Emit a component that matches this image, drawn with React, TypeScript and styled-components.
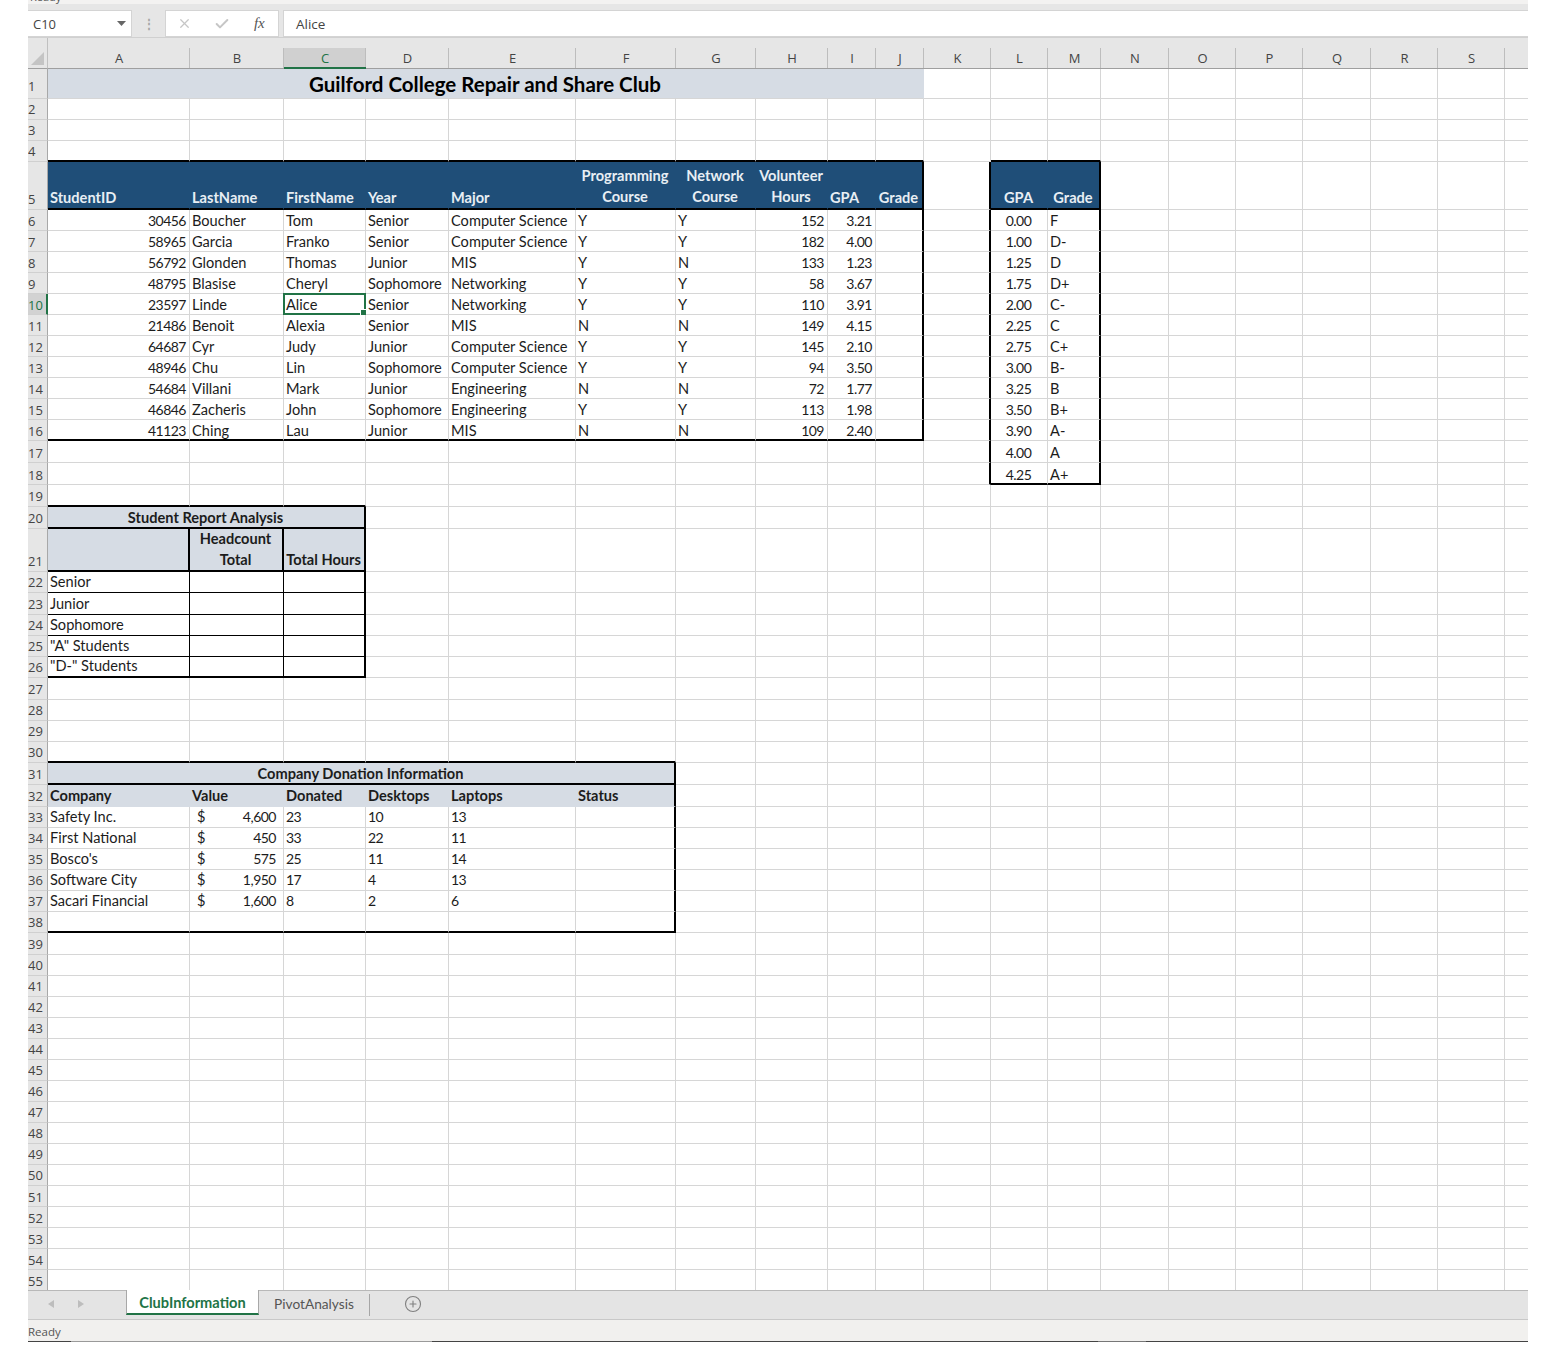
import React from 'react';
import styled, { createGlobalStyle } from 'styled-components';
import { X, Check, CirclePlus } from 'lucide-react';

const COL_WIDTHS = [142, 94, 82, 83, 127, 100, 80, 72, 48, 48, 67, 57, 53, 68, 67, 67, 68, 67, 67, 24];
const COL_LETTERS = 'ABCDEFGHIJKLMNOPQRS '.split('');
const ROW_EDGES = [
  69, 98, 119, 140, 161, 209, 230, 251, 272, 293, 314, 335, 356, 377, 398, 419, 440, 462, 484, 506, 528, 571, 592, 614,
  635, 656, 677, 699, 720, 741, 762, 784, 806, 827, 848, 869, 890, 911, 932, 954,
];
while (ROW_EDGES[ROW_EDGES.length - 1] < 1290) ROW_EDGES.push(ROW_EDGES[ROW_EDGES.length - 1] + 21);
const ROW_HEIGHTS = ROW_EDGES.slice(1).map((edge, i) => edge - ROW_EDGES[i] + (i === 0 ? 1 : 0));

const SLATE = '#d6dce4';
const NAVY = '#1f4e78';

type CellData = {
  lines?: string[];
  align?: 'left' | 'right' | 'center';
  bold?: boolean;
  fill?: string;
  light?: boolean;
  span?: number;
  title?: boolean;
  money?: string;
  sink?: number;
  right?: number;
  bottom?: number;
};

const cells: Record<string, CellData> = {};
const keyOf = (col: number, row: number) => `${col}:${row}`;
const put = (col: number, row: number, data: CellData) => {
  cells[keyOf(col, row)] = { ...cells[keyOf(col, row)], ...data };
};
const covered = new Set<string>();
const merge = (col: number, row: number, span: number, data: CellData) => {
  put(col, row, { ...data, span });
  for (let c = col + 1; c < col + span; c++) covered.add(keyOf(c, row));
};
const fillRange = (c1: number, c2: number, r1: number, r2: number, fill: string) => {
  for (let r = r1; r <= r2; r++) for (let c = c1; c <= c2; c++) put(c, r, { fill });
};
// outline a block of cells: the top and left edges live on the neighbouring cell
const box = (c1: number, r1: number, c2: number, r2: number, weight = 2) => {
  for (let c = c1; c <= c2; c++) {
    put(c, r1 - 1, { bottom: weight });
    put(c, r2, { bottom: weight });
  }
  for (let r = r1; r <= r2; r++) {
    if (c1 > 0) put(c1 - 1, r, { right: weight });
    put(c2, r, { right: weight });
  }
};

// title
merge(0, 1, 10, { lines: ['Guilford College Repair and Share Club'], title: true, fill: SLATE, align: 'center', bold: true });

// student table
fillRange(0, 9, 5, 5, NAVY);
const studentHead: [string[], CellData['align']][] = [
  [['StudentID'], 'left'],
  [['LastName'], 'left'],
  [['FirstName'], 'left'],
  [['Year'], 'left'],
  [['Major'], 'left'],
  [['Programming', 'Course'], 'center'],
  [['Network', 'Course'], 'center'],
  [['Volunteer', 'Hours'], 'center'],
  [['GPA'], 'left'],
  [['Grade'], 'center'],
];
studentHead.forEach(([lines, align], c) => put(c, 5, { lines, align, bold: true, light: true, sink: lines.length > 1 ? -1 : 0 }));
const students = [
  ['30456', 'Boucher', 'Tom', 'Senior', 'Computer Science', 'Y', 'Y', '152', '3.21'],
  ['58965', 'Garcia', 'Franko', 'Senior', 'Computer Science', 'Y', 'Y', '182', '4.00'],
  ['56792', 'Glonden', 'Thomas', 'Junior', 'MIS', 'Y', 'N', '133', '1.23'],
  ['48795', 'Blasise', 'Cheryl', 'Sophomore', 'Networking', 'Y', 'Y', '58', '3.67'],
  ['23597', 'Linde', 'Alice', 'Senior', 'Networking', 'Y', 'Y', '110', '3.91'],
  ['21486', 'Benoit', 'Alexia', 'Senior', 'MIS', 'N', 'N', '149', '4.15'],
  ['64687', 'Cyr', 'Judy', 'Junior', 'Computer Science', 'Y', 'Y', '145', '2.10'],
  ['48946', 'Chu', 'Lin', 'Sophomore', 'Computer Science', 'Y', 'Y', '94', '3.50'],
  ['54684', 'Villani', 'Mark', 'Junior', 'Engineering', 'N', 'N', '72', '1.77'],
  ['46846', 'Zacheris', 'John', 'Sophomore', 'Engineering', 'Y', 'Y', '113', '1.98'],
  ['41123', 'Ching', 'Lau', 'Junior', 'MIS', 'N', 'N', '109', '2.40'],
];
students.forEach((row, i) =>
  row.forEach((text, c) => put(c, 6 + i, { lines: [text], align: c === 0 || c >= 7 ? 'right' : 'left' })),
);
box(0, 5, 9, 16);
for (let c = 0; c <= 9; c++) put(c, 5, { bottom: 2 });

// grade scale
fillRange(11, 12, 5, 5, NAVY);
put(11, 5, { lines: ['GPA'], align: 'center', bold: true, light: true, sink: 0 });
put(12, 5, { lines: ['Grade'], align: 'center', bold: true, light: true, sink: 0 });
const scale = [
  ['0.00', 'F'], ['1.00', 'D-'], ['1.25', 'D'], ['1.75', 'D+'], ['2.00', 'C-'], ['2.25', 'C'], ['2.75', 'C+'],
  ['3.00', 'B-'], ['3.25', 'B'], ['3.50', 'B+'], ['3.90', 'A-'], ['4.00', 'A'], ['4.25', 'A+'],
];
scale.forEach(([gpa, grade], i) => {
  put(11, 6 + i, { lines: [gpa], align: 'center' });
  put(12, 6 + i, { lines: [grade], align: 'left' });
});
box(11, 5, 12, 18);
put(11, 5, { bottom: 2 });
put(12, 5, { bottom: 2 });

// report analysis
merge(0, 20, 3, { lines: ['Student Report Analysis'], fill: SLATE, align: 'center', bold: true, sink: 1 });
fillRange(0, 2, 21, 21, SLATE);
put(1, 21, { lines: ['Headcount', 'Total'], align: 'center', bold: true, sink: 0 });
put(2, 21, { lines: ['Total Hours'], align: 'center', bold: true, sink: 0 });
['Senior', 'Junior', 'Sophomore', '"A" Students', '"D-" Students'].forEach((text, i) => put(0, 22 + i, { lines: [text], sink: 0 }));
for (let r = 22; r <= 26; r++) for (let c = 0; c <= 2; c++) box(c, r, c, r, 1);
for (let c = 0; c <= 2; c++) box(c, 21, c, 21);
box(0, 20, 2, 20);
box(0, 20, 2, 26);

// donations
merge(0, 31, 6, { lines: ['Company Donation Information'], fill: SLATE, align: 'center', bold: true, sink: 1 });
fillRange(0, 5, 32, 32, SLATE);
['Company', 'Value', 'Donated', 'Desktops', 'Laptops', 'Status'].forEach((text, c) => put(c, 32, { lines: [text], bold: true, sink: 0 }));
const donations = [
  ['Safety Inc.', '4,600', '23', '10', '13'],
  ['First National', '450', '33', '22', '11'],
  ["Bosco's", '575', '25', '11', '14'],
  ['Software City', '1,950', '17', '4', '13'],
  ['Sacari Financial', '1,600', '8', '2', '6'],
];
donations.forEach((row, i) =>
  row.forEach((text, c) => put(c, 33 + i, c === 1 ? { money: text, sink: 0 } : { lines: [text], sink: 0 })),
);
box(0, 31, 5, 38);
box(0, 31, 5, 31);

const isNumber = (text: string) => /^[\d.,]+$/.test(text);

// the row numbers drift against their lines in the picture
const labelSink = (row: number) => {
  if (row === 1) return -2;
  if (row <= 5) return 0;
  if (row <= 18) return 1;
  return row <= 50 ? 0 : 1;
};

const GlobalStyle = createGlobalStyle`
  html, body {
    margin: 0;
    padding: 0;
    background: #fff;
  }
`;

const Page = styled.div`
  width: 1500px;
  height: 1349px;
  margin-left: 28px;
  display: flex;
  flex-direction: column;
  overflow: hidden;
  font-family: "Open Sans", "Liberation Sans", sans-serif;
`;

const TopStrip = styled.div`
  height: 4px;
  flex: none;
  background: #f3f2f1;
  display: flex;
  align-items: flex-end;
  overflow: hidden;
  padding-left: 2px;
  font-size: 11px;
  line-height: 14px;
  color: #555;
`;

const FormulaBar = styled.div`
  height: 34px;
  flex: none;
  box-sizing: border-box;
  padding: 6px 0 0;
  background: #e6e6e6;
  display: flex;
  align-items: stretch;
  border-bottom: 1px solid #d0d0d0;
`;

const NameBox = styled.div`
  width: 104px;
  box-sizing: border-box;
  background: #fff;
  border: 1px solid #d4d4d4;
  border-left: 0;
  display: flex;
  align-items: center;
  justify-content: space-between;
  padding: 0 5px;
  font-size: 13px;
  color: #444;
`;

const Caret = styled.svg`
  width: 9px;
  height: 5px;
  fill: #666;
`;

const Grip = styled.div`
  width: 33px;
  display: flex;
  align-items: center;
  justify-content: center;
  color: #a6a6a6;
  font-size: 12px;
  font-weight: 700;
  line-height: 1;
`;

const FormulaButtons = styled.div`
  width: 114px;
  box-sizing: border-box;
  margin-right: 4px;
  background: #fff;
  border: 1px solid #d4d4d4;
  display: grid;
  grid-template-columns: repeat(3, 1fr);
  align-items: center;
  justify-items: center;
  color: #c6c6c6;
`;

const Fx = styled.span`
  font-family: "Liberation Serif", serif;
  font-style: italic;
  font-size: 15px;
  color: #555;
`;

const FormulaInput = styled.div`
  flex: 1;
  box-sizing: border-box;
  background: #fff;
  border: 1px solid #d4d4d4;
  border-right: 0;
  display: flex;
  align-items: center;
  padding-left: 12px;
  font-size: 13.5px;
  color: #444;
`;

const Sheet = styled.div<{ $cols: string; $rows: string }>`
  flex: none;
  height: 1252px;
  display: grid;
  grid-template-columns: ${p => p.$cols};
  grid-template-rows: ${p => p.$rows};
  background: #fff;
  overflow: hidden;
  font-family: Lato, "Open Sans", sans-serif;
  color: #1c1c1c;
`;

const Corner = styled.div`
  background: #e6e6e6;
  border-bottom: 1px solid #9f9f9f;
  border-right: 1px solid #c0c0c0;
  display: flex;
  align-items: flex-end;
  justify-content: flex-end;
  padding: 0 3px 3px 0;
  box-sizing: border-box;
`;

const CornerMark = styled.svg`
  width: 13px;
  height: 13px;
  fill: #c4c4c4;
`;

const ColHead = styled.div<{ $active?: boolean }>`
  box-sizing: border-box;
  background: ${p => (p.$active ? 'linear-gradient(#e6e6e6 10px, #d0d0d0 10px)' : '#e6e6e6')};
  border-bottom: ${p => (p.$active ? '2px solid #217346' : '1px solid #9f9f9f')};
  display: flex;
  align-items: flex-end;
  justify-content: center;
  font-family: "Open Sans", sans-serif;
  font-size: 13px;
  line-height: 20px;
  color: ${p => (p.$active ? '#217346' : '#444')};
  position: relative;

  & > span {
    margin-bottom: ${p => (p.$active ? '-1px' : '0')};
  }

  &::after {
    content: '';
    position: absolute;
    right: 0;
    top: 10px;
    bottom: 0;
    width: 1px;
    background: #bdbdbd;
  }
`;

const RowHead = styled.div<{ $active?: boolean; $sink: number }>`
  box-sizing: border-box;
  background: ${p => (p.$active ? '#d2d2d2' : '#e6e6e6')};
  border-bottom: 1px solid #d0d0d0;
  border-right: ${p => (p.$active ? '2px solid #217346' : '1px solid #a8a8a8')};
  display: flex;
  align-items: flex-end;
  justify-content: flex-start;
  font-family: "Open Sans", sans-serif;
  font-size: 13px;
  line-height: 20px;
  color: ${p => (p.$active ? '#217346' : '#444')};

  & > span {
    margin-bottom: ${p => -p.$sink}px;
  }
`;

const Cell = styled.div<{
  $align: string;
  $bold?: boolean;
  $fill?: string;
  $light?: boolean;
  $span: number;
  $title?: boolean;
  $sink: number;
  $right?: number;
  $bottom?: number;
}>`
  box-sizing: border-box;
  position: relative;
  min-width: 0;
  grid-column: span ${p => p.$span};
  padding: 0 3px 0 2px;
  display: flex;
  flex-direction: column;
  justify-content: ${p => (p.$title ? 'center' : 'flex-end')};
  align-items: ${p => (p.$align === 'right' ? 'flex-end' : p.$align === 'center' ? 'center' : 'flex-start')};
  background: ${p => p.$fill || 'transparent'};
  border-right: ${p => (p.$right ? `${p.$right}px solid #000` : `1px solid ${p.$fill || '#d6d6d6'}`)};
  border-bottom: ${p => (p.$bottom ? `${p.$bottom}px solid #000` : `1px solid ${p.$title ? '#d6d6d6' : p.$fill || '#d6d6d6'}`)};
  font-weight: ${p => (p.$bold ? 700 : 400)};
  font-size: ${p => (p.$title ? '20.5px' : '14.6px')};
  line-height: 21px;
  color: ${p => (p.$light ? '#e8eef4' : p.$title ? '#000' : '#1c1c1c')};
  white-space: nowrap;

  & > :nth-last-child(1) {
    margin-bottom: ${p => (p.$title ? -2 : -p.$sink)}px;
  }
`;

const CellLine = styled.span<{ $number?: boolean }>`
  display: block;
  font-size: ${p => (p.$number ? '14px' : 'inherit')};
  letter-spacing: ${p => (p.$number ? '-0.5px' : 'normal')};
`;

const MoneyRow = styled.div`
  width: 100%;
  box-sizing: border-box;
  display: flex;
  justify-content: space-between;
  padding: 0 4px 0 5px;
`;

const Selection = styled.div`
  position: absolute;
  inset: -1px;
  border: 2px solid #217346;
  pointer-events: none;
`;

const FillHandle = styled.div`
  position: absolute;
  right: -3px;
  bottom: -3px;
  width: 5px;
  height: 5px;
  background: #217346;
  border: 1px solid #fff;
`;

const TabBar = styled.div`
  height: 30px;
  flex: none;
  box-sizing: border-box;
  background: #e4e4e4;
  border-top: 1px solid #b8b8b8;
  border-bottom: 1px solid #c8c8c8;
  display: flex;
  align-items: flex-start;
`;

const TabNav = styled.div`
  width: 98px;
  height: 25px;
  display: flex;
  align-items: center;
  gap: 24px;
  padding-left: 20px;
  box-sizing: border-box;
`;

const NavArrow = styled.svg`
  width: 6px;
  height: 8px;
  fill: #bdbdbd;
`;

const Tab = styled.div<{ $active?: boolean }>`
  display: flex;
  align-items: center;
  justify-content: center;
  box-sizing: border-box;
  width: ${p => (p.$active ? '133px' : '110px')};
  height: 25px;
  margin-top: -1px;
  padding-top: 1px;
  font-family: Lato, "Open Sans", sans-serif;
  font-size: ${p => (p.$active ? '14.6px' : '13.7px')};
  font-weight: ${p => (p.$active ? 700 : 400)};
  color: ${p => (p.$active ? '#217346' : '#555')};
  background: ${p => (p.$active ? '#fff' : 'transparent')};
  border-left: ${p => (p.$active ? '1px solid #a8a8a8' : '0')};
  border-right: ${p => (p.$active ? '1px solid #a8a8a8' : '0')};
  border-bottom: ${p => (p.$active ? '2px solid #217346' : '0')};
`;

const TabDivider = styled.div`
  width: 1px;
  height: 22px;
  margin-top: 3px;
  background: #a6a6a6;
`;

const AddSheet = styled.div`
  display: flex;
  align-items: center;
  height: 26px;
  margin-left: 34px;
  color: #808080;
`;

const StatusBar = styled.div`
  height: 21px;
  flex: none;
  box-sizing: border-box;
  padding-top: 1px;
  background: #f1f0ee;
  display: flex;
  align-items: center;
  font-size: 11.5px;
  color: #555;
`;

const StatusEdge = styled.div`
  height: 1px;
  flex: none;
  background: linear-gradient(
    to right,
    #444 0 43px,
    #9a9a9a 43px 404px,
    #444 404px 1070px,
    #777 1070px 1118px,
    #444 1118px
  );
`;

const columnTemplate = ['20px', ...COL_WIDTHS.map(w => `${w}px`)].join(' ');
const rowTemplate = ['31px', ...ROW_HEIGHTS.map(h => `${h}px`)].join(' ');

export default function App() {
  return (
    <>
      <GlobalStyle />
      <Page>
        <TopStrip>
          <span>Ready</span>
        </TopStrip>
        <FormulaBar>
          <NameBox>
            C10
            <Caret viewBox="0 0 9 5">
              <path d="M0 0h9L4.5 5z" />
            </Caret>
          </NameBox>
          <Grip>⋮</Grip>
          <FormulaButtons>
            <X size={15} strokeWidth={2} />
            <Check size={16} strokeWidth={3} />
            <Fx>fx</Fx>
          </FormulaButtons>
          <FormulaInput>Alice</FormulaInput>
        </FormulaBar>
        <Sheet $cols={columnTemplate} $rows={rowTemplate}>
          <Corner>
            <CornerMark viewBox="0 0 14 14">
              <path d="M14 0v14H0z" />
            </CornerMark>
          </Corner>
          {COL_LETTERS.map((letter, c) => (
            <ColHead key={c} $active={letter === 'C'}>
              <span>{letter}</span>
            </ColHead>
          ))}
          {ROW_HEIGHTS.map((_, i) => {
            const row = i + 1;
            return (
              <React.Fragment key={row}>
                <RowHead $active={row === 10} $sink={labelSink(row)}>
                  <span>{row}</span>
                </RowHead>
                {COL_WIDTHS.map((_w, c) => {
                  if (covered.has(keyOf(c, row))) return null;
                  const cell = cells[keyOf(c, row)] || {};
                  const span = cell.span || 1;
                  const lastCell = cells[keyOf(c + span - 1, row)] || {};
                  const selected = c === 2 && row === 10;
                  return (
                    <Cell
                      key={c}
                      $align={cell.align || 'left'}
                      $bold={cell.bold}
                      $fill={cell.fill}
                      $light={cell.light}
                      $span={span}
                      $title={cell.title}
                      $sink={cell.sink ?? (cell.bottom || 1)}
                      $right={lastCell.right}
                      $bottom={cell.bottom}
                    >
                      {selected && (
                        <Selection>
                          <FillHandle />
                        </Selection>
                      )}
                      {cell.lines?.map(line => (
                        <CellLine key={line} $number={isNumber(line)}>
                          {line}
                        </CellLine>
                      ))}
                      {cell.money && (
                        <MoneyRow>
                          <span>$</span>
                          <CellLine $number>{cell.money}</CellLine>
                        </MoneyRow>
                      )}
                    </Cell>
                  );
                })}
              </React.Fragment>
            );
          })}
        </Sheet>
        <TabBar>
          <TabNav>
            <NavArrow viewBox="0 0 6 8">
              <path d="M6 0v8L0 4z" />
            </NavArrow>
            <NavArrow viewBox="0 0 6 8">
              <path d="M0 0v8l6-4z" />
            </NavArrow>
          </TabNav>
          <Tab $active>ClubInformation</Tab>
          <Tab>PivotAnalysis</Tab>
          <TabDivider />
          <AddSheet>
            <CirclePlus size={18} strokeWidth={1.5} />
          </AddSheet>
        </TabBar>
        <StatusBar>Ready</StatusBar>
        <StatusEdge />
      </Page>
    </>
  );
}
